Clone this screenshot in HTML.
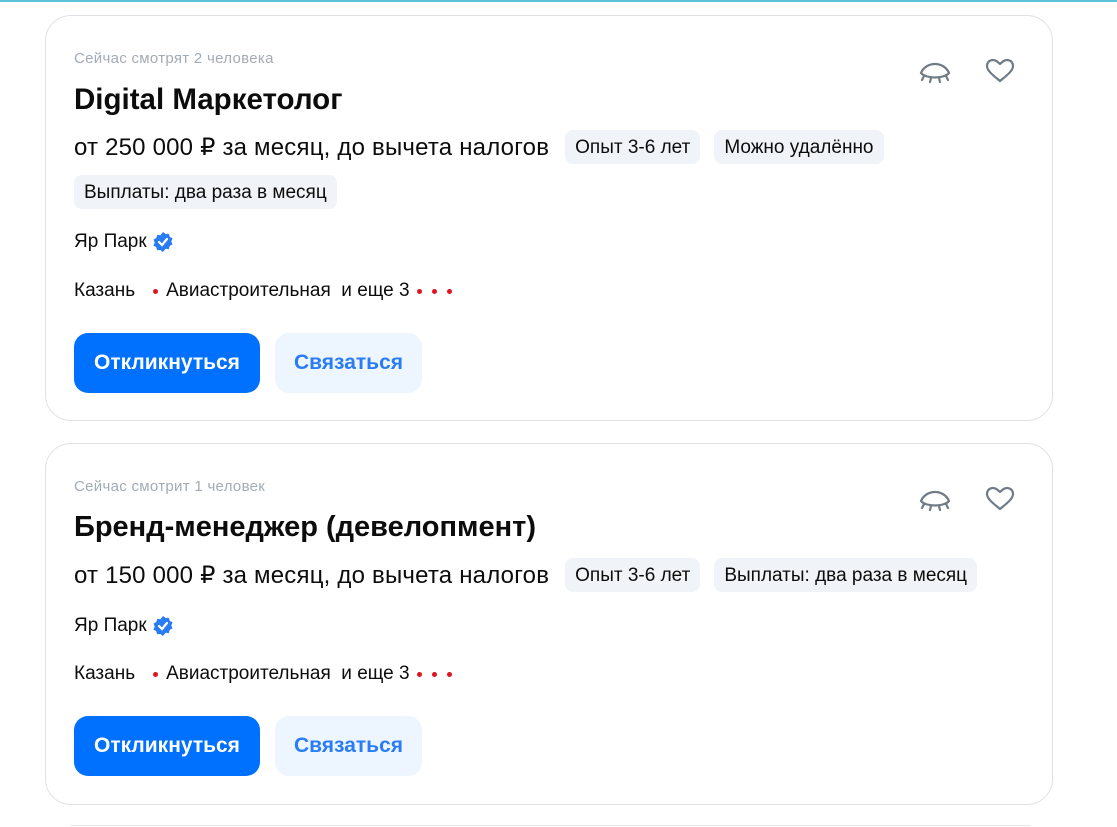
<!DOCTYPE html><html><head><meta charset="utf-8"><style>
body{margin:0;width:1117px;height:827px;background:#fff;font-family:"Liberation Sans",sans-serif;color:#0c0c0c;position:relative;overflow:hidden}
.top{position:absolute;left:0;top:0;width:1117px;height:2px;background:#5cc4d8}
.card{position:absolute;left:45px;width:1008px;border:1px solid #dfe2e7;border-radius:26px;box-sizing:border-box}
.a{position:absolute;left:28px;white-space:nowrap}
.v{font-size:15px;color:#a3abb6;letter-spacing:0.3px}
.t{font-size:29.5px;font-weight:bold}
.s{font-size:24px;display:flex;align-items:center}
.s b{font-weight:normal;letter-spacing:0.2px}
.tag{display:inline-block;background:#f0f3f7;border-radius:8px;font-size:19px;padding:0 10px;height:34px;line-height:36px;margin-left:14px;letter-spacing:0}
.f{font-size:19px;display:flex;align-items:center}
.d{display:inline-block;width:5px;height:5px;border-radius:50%;background:#e0141e;margin:0 5px}
.b1,.b2{position:absolute;top:0;height:60px;line-height:60px;border-radius:14px;font-size:21px;font-weight:bold;text-align:center}
.b1{background:#0070ff;color:#fff;width:186px;left:28px}
.b2{background:#edf5ff;color:#2a7cf5;width:147px;left:229px}
.ic{position:absolute;top:0}
</style></head><body><div class="top"></div>

<div class="card" style="top:15px;height:406px">
<div class="a v" style="top:34px">Сейчас смотрят 2 человека</div>
<svg class="ic" style="left:872px;top:44px" width="34" height="26" viewBox="0 0 34 26" fill="none" stroke="#6f7b86" stroke-width="2.2" stroke-linecap="round"><path d="M3 13C8 1 26 1 31 13C26 19 8 19 3 13Z"/><path d="M6 16l-2 4M13 18l-1 4M21 18l1 4M28 16l2 4"/></svg>
<svg class="ic" style="left:938px;top:42px" width="32" height="26" viewBox="0 0 32 26" fill="none" stroke="#6f7b86" stroke-width="2.2" stroke-linejoin="round"><path d="M16 23C10 18 3 13 3 8C3 4 6 2 9 2C12 2 14 4 16 6C18 4 20 2 23 2C26 2 29 4 29 8C29 13 22 18 16 23Z"/></svg>
<div class="a t" style="top:67px">Digital Маркетолог</div>
<div class="a s" style="top:114px;height:34px"><b>от 250 000 ₽ за месяц, до вычета налогов</b><span class="tag" style="margin-left:16px">Опыт 3-6 лет</span><span class="tag">Можно удалённо</span></div>
<div class="a" style="top:159px"><span class="tag" style="margin-left:0">Выплаты: два раза в месяц</span></div>
<div class="a f" style="top:215px">Яр Парк&nbsp;<svg width="22" height="22" viewBox="0 0 22 22"><path d="M11 1l2.6 2 3.2-.3.9 3.1 2.8 1.6-1.2 3 1.2 3-2.8 1.6-.9 3.1-3.2-.3L11 21l-2.6-2-3.2.3-.9-3.1-2.8-1.6 1.2-3-1.2-3 2.8-1.6.9-3.1 3.2.3z" fill="#2a7cf5"/><path d="M7 11l3 3 5-6" stroke="#fff" stroke-width="2.2" fill="none" stroke-linecap="round"/></svg></div>
<div class="a f" style="top:264px">Казань<span class="d" style="margin-left:18px;margin-right:8px"></span>Авиастроительная&nbsp;&nbsp;и еще 3<span class="d" style="margin-left:7px"></span><span class="d"></span><span class="d"></span></div>
<div style="position:absolute;top:317px;left:0"><div class="b1">Откликнуться</div><div class="b2">Связаться</div></div>
</div>

<div class="card" style="top:443px;height:362px">
<div class="a v" style="top:34px">Сейчас смотрит 1 человек</div>
<svg class="ic" style="left:872px;top:44px" width="34" height="26" viewBox="0 0 34 26" fill="none" stroke="#6f7b86" stroke-width="2.2" stroke-linecap="round"><path d="M3 13C8 1 26 1 31 13C26 19 8 19 3 13Z"/><path d="M6 16l-2 4M13 18l-1 4M21 18l1 4M28 16l2 4"/></svg>
<svg class="ic" style="left:938px;top:42px" width="32" height="26" viewBox="0 0 32 26" fill="none" stroke="#6f7b86" stroke-width="2.2" stroke-linejoin="round"><path d="M16 23C10 18 3 13 3 8C3 4 6 2 9 2C12 2 14 4 16 6C18 4 20 2 23 2C26 2 29 4 29 8C29 13 22 18 16 23Z"/></svg>
<div class="a t" style="top:67px;font-size:29px">Бренд-менеджер (девелопмент)</div>
<div class="a s" style="top:114px;height:34px"><b>от 150 000 ₽ за месяц, до вычета налогов</b><span class="tag" style="margin-left:16px">Опыт 3-6 лет</span><span class="tag">Выплаты: два раза в месяц</span></div>
<div class="a f" style="top:171px">Яр Парк&nbsp;<svg width="22" height="22" viewBox="0 0 22 22"><path d="M11 1l2.6 2 3.2-.3.9 3.1 2.8 1.6-1.2 3 1.2 3-2.8 1.6-.9 3.1-3.2-.3L11 21l-2.6-2-3.2.3-.9-3.1-2.8-1.6 1.2-3-1.2-3 2.8-1.6.9-3.1 3.2.3z" fill="#2a7cf5"/><path d="M7 11l3 3 5-6" stroke="#fff" stroke-width="2.2" fill="none" stroke-linecap="round"/></svg></div>
<div class="a f" style="top:219px">Казань<span class="d" style="margin-left:18px;margin-right:8px"></span>Авиастроительная&nbsp;&nbsp;и еще 3<span class="d" style="margin-left:7px"></span><span class="d"></span><span class="d"></span></div>
<div style="position:absolute;top:272px;left:0"><div class="b1">Откликнуться</div><div class="b2">Связаться</div></div>
</div>
<div style="position:absolute;left:70px;top:825px;width:960px;height:1px;background:#e3e6ea"></div>
</body></html>
